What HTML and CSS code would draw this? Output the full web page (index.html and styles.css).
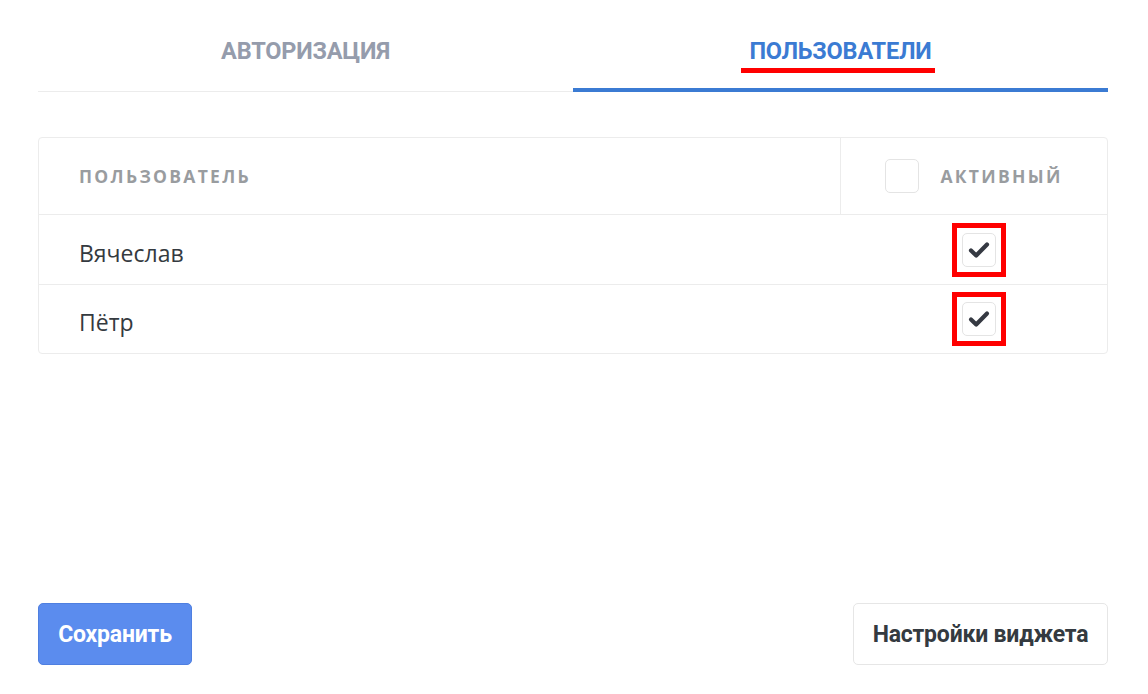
FILE: index.html
```html
<!DOCTYPE html>
<html lang="ru">
<head>
<meta charset="utf-8">
<title>Пользователи</title>
<link rel="stylesheet" href="styles.css">
</head>
<body>
<div class="page">
  <nav class="tabs">
    <div class="tab">АВТОРИЗАЦИЯ</div>
    <div class="tab tab-active"><span class="tab-label">ПОЛЬЗОВАТЕЛИ</span></div>
  </nav>

  <div class="table">
    <div class="row row-head">
      <div class="cell cell-user">ПОЛЬЗОВАТЕЛЬ</div>
      <div class="cell cell-active head-active">
        <span class="box"></span>
        <span>АКТИВНЫЙ</span>
      </div>
    </div>
    <div class="row">
      <div class="cell cell-user">Вячеслав</div>
      <div class="cell cell-active">
        <span class="mark">
          <span class="box">
            <svg viewBox="0 0 24 24" width="24" height="24"><path d="M4 12.5 L9.2 17.5 L20 6.5" fill="none" stroke="#353942" stroke-width="4.2" stroke-linecap="round" stroke-linejoin="round"/></svg>
          </span>
        </span>
      </div>
    </div>
    <div class="row row-last">
      <div class="cell cell-user">Пётр</div>
      <div class="cell cell-active">
        <span class="mark">
          <span class="box">
            <svg viewBox="0 0 24 24" width="24" height="24"><path d="M4 12.5 L9.2 17.5 L20 6.5" fill="none" stroke="#353942" stroke-width="4.2" stroke-linecap="round" stroke-linejoin="round"/></svg>
          </span>
        </span>
      </div>
    </div>
  </div>

  <div class="spacer"></div>

  <div class="actions">
    <button class="btn btn-primary">Сохранить</button>
    <button class="btn btn-default">Настройки виджета</button>
  </div>
</div>
</body>
</html>
```

FILE: styles.css
```css
* { box-sizing: border-box; }

html, body {
  margin: 0;
  padding: 0;
  background: #ffffff;
}

body {
  font-family: "Open Sans", "Noto Sans", sans-serif;
  color: #343a40;
}

.page {
  width: 1148px;
  height: 694px;
  padding: 0 40px 29px 38px;
  display: flex;
  flex-direction: column;
}

.tabs {
  display: flex;
  height: 92px;
}

.tab {
  flex: 1;
  display: flex;
  justify-content: center;
  align-items: flex-start;
  padding-top: 37px;
  font-family: "Roboto", "Liberation Sans", sans-serif;
  font-weight: 700;
  font-size: 23.5px;
  letter-spacing: -0.2px;
  color: #959cac;
  border-bottom: 1px solid #ececec;
}

.tab-active {
  color: #3b7bd3;
  border-bottom: 4px solid #3b7bd3;
}

.tab-label {
  position: relative;
}

.tab-label::after {
  content: "";
  position: absolute;
  left: -8px;
  right: -3px;
  top: 31px;
  height: 5px;
  background: #ff0000;
}

.table {
  margin-top: 45px;
  border: 1px solid #ececec;
  border-radius: 4px;
}

.row {
  display: flex;
  height: 70px;
  border-top: 1px solid #ececec;
}

.row-head {
  height: 76px;
  border-top: none;
}

.row-last {
  height: 69px;
}

.cell {
  display: flex;
  align-items: center;
}

.cell-user {
  flex: 1;
  padding-left: 40px;
  font-size: 23px;
  color: #343a40;
  padding-top: 6px;
}

.row-head .cell-user,
.head-active {
  font-size: 17.5px;
  font-weight: 700;
  letter-spacing: 2.3px;
  color: #999c9f;
  padding-top: 0;
}

.cell-active {
  width: 267px;
  justify-content: center;
  padding-left: 10px;
}

.head-active {
  border-left: 1px solid #ececec;
  gap: 21px;
  padding-left: 0;
  padding-right: 0;
}

.box {
  width: 34px;
  height: 34px;
  border: 1px solid #e4e4e4;
  border-radius: 5px;
  display: flex;
  align-items: center;
  justify-content: center;
  background: #fff;
}

.box svg {
  display: block;
}

.mark {
  border: 5px solid #ff0000;
  padding: 5px;
  display: flex;
}

.spacer {
  flex: 1;
}

.actions {
  display: flex;
  justify-content: space-between;
  align-items: center;
}

.btn {
  height: 62px;
  border-radius: 5px;
  font-family: "Roboto", "Liberation Sans", sans-serif;
  font-weight: 700;
  font-size: 23px;
  letter-spacing: -0.2px;
  padding: 0;
  cursor: pointer;
}

.btn-primary {
  width: 154px;
  background: #5b8cee;
  border: 1px solid #4f7fe0;
  color: #ffffff;
}

.btn-default {
  width: 255px;
  background: #ffffff;
  border: 1px solid #e6e6e6;
  color: #343a40;
}
```
